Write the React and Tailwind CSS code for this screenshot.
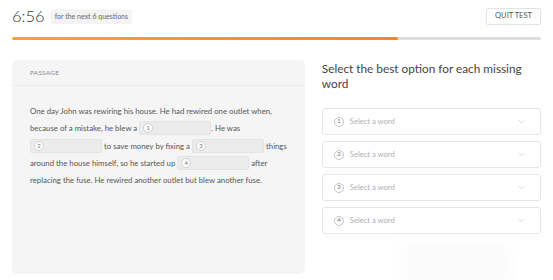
import React from "react";
import { ChevronDown } from "lucide-react";

function Blank({ n }) {
  return (
    <span className="inline-flex align-middle items-center h-[14px] w-[72px] bg-[#ececec] border border-[#e3e3e3] rounded-[2px] px-[3px] relative top-[-1px]">
      <span className="w-[10px] h-[10px] rounded-full bg-white border border-[#cfcfcf] flex items-center justify-center text-[6px] leading-none text-[#777]">
        {n}
      </span>
    </span>
  );
}

function Select({ n }) {
  return (
    <div className="h-[27px] border border-[#e6e6e6] rounded-[3px] flex items-center pl-[11px] pr-[14px] bg-white">
      <span className="w-[10px] h-[10px] rounded-full border border-[#c4c4c4] flex items-center justify-center text-[6.5px] leading-none text-[#777]">
        {n}
      </span>
      <span className="ml-[6px] text-[7.6px] text-[#b0b0b0]">Select a word</span>
      <ChevronDown className="ml-auto text-[#b5b5b5]" size={9} strokeWidth={1.5} />
    </div>
  );
}

export default function App() {
  return (
    <div className="w-[553px] h-[280px] bg-white overflow-hidden px-[12px] font-['Lato',sans-serif]">
      <div className="h-[32px] flex items-center">
        <span className="text-[16.5px] font-light text-[#333] leading-none">6:56</span>
        <span className="ml-[6px] h-[15px] px-[4px] bg-[#f4f4f4] rounded-[3px] text-[7px] text-[#666] flex items-center">
          for the next 6 questions
        </span>
        <button className="ml-auto h-[17px] w-[55px] border border-[#e2e2e2] rounded-[2px] text-[7.5px] text-[#555] flex items-center justify-center bg-white">
          QUIT TEST
        </button>
      </div>
      <div className="mt-[5px] h-[3px] rounded-full bg-[#dedede] overflow-hidden">
        <div className="h-full w-[386px] rounded-full bg-gradient-to-r from-[#f6a81e] to-[#f8861f]" />
      </div>
      <div className="mt-[20px] flex gap-[17px]">
        <div className="w-[293px] h-[214px] bg-[#f5f5f5] rounded-[5px]">
          <div className="h-[26px] px-[18px] flex items-center border-b border-[#ebebeb] text-[6.5px] text-[#888] tracking-[0.2px]">
            PASSAGE
          </div>
          <div className="pt-[17px] px-[18px] text-[7.8px] leading-[17.3px] text-[#555]">
            <div className="whitespace-nowrap">One day John was rewiring his house. He had rewired one outlet when,</div>
            <div className="whitespace-nowrap">because of a mistake, he blew a <Blank n="1" />. He was</div>
            <div className="whitespace-nowrap"><Blank n="2" /> to save money by fixing a <Blank n="3" /> things</div>
            <div className="whitespace-nowrap">around the house himself, so he started up <Blank n="4" /> after</div>
            <div className="whitespace-nowrap">replacing the fuse. He rewired another outlet but blew another fuse.</div>
          </div>
        </div>
        <div className="w-[221px]">
          <div className="pt-[1px] text-[11.8px] leading-[15px] text-[#444]">
            Select the best option for each missing word
          </div>
          <div className="mt-[17px] flex flex-col gap-[6px]">
            <Select n="1" />
            <Select n="2" />
            <Select n="3" />
            <Select n="4" />
          </div>
          <div className="mt-[10px] ml-[80px] w-[110px] h-[40px] rounded-[8px] bg-[#fbfbfb] blur-[6px]" />
        </div>
      </div>
    </div>
  );
}
